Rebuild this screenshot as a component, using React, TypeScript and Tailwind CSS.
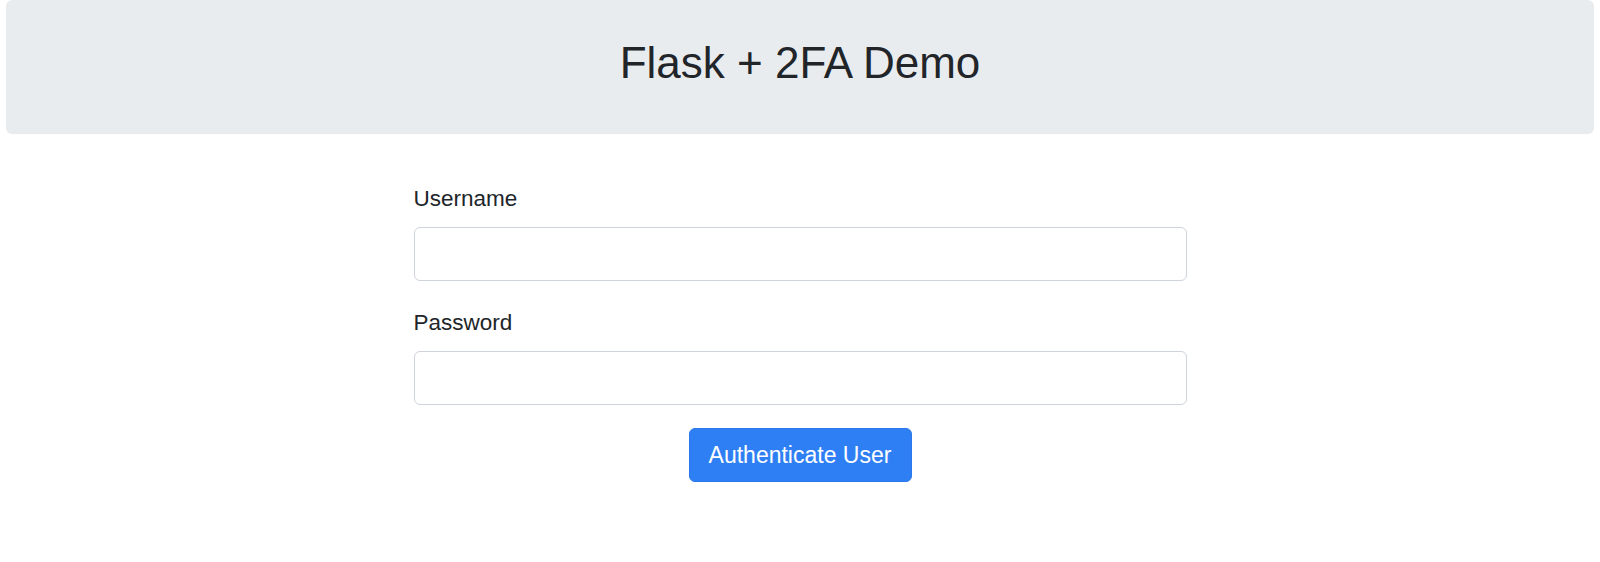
export default function App() {
  return (
    <div className="min-h-[562px] bg-white font-['Liberation_Sans',Arial,sans-serif] text-[#212529]">
      <header className="mx-[6px] h-[134px] rounded-[6px] bg-[#e9ecef] pt-[37px] text-center">
        <h1 className="text-[44px] leading-[1.2] font-normal">Flask + 2FA Demo</h1>
      </header>

      <form className="mx-auto mt-[48px] flex w-[773px] flex-col">
        <label htmlFor="username" className="text-[22.5px] leading-[33px]">
          Username
        </label>
        <input
          id="username"
          type="text"
          className="mt-[12px] h-[54px] rounded-[6px] border border-[#ced4da] bg-white px-3 text-[22px] outline-none"
        />

        <label htmlFor="password" className="mt-[25px] text-[22.5px] leading-[33px]">
          Password
        </label>
        <input
          id="password"
          type="password"
          className="mt-[12px] h-[54px] rounded-[6px] border border-[#ced4da] bg-white px-3 text-[22px] outline-none"
        />

        <div className="mt-[23px] flex justify-center">
          <button
            type="submit"
            className="h-[54px] w-[223px] rounded-[6px] border border-[#2a78ec] bg-[#2f7ff4] text-[23px] text-white"
          >
            Authenticate User
          </button>
        </div>
      </form>
    </div>
  );
}
